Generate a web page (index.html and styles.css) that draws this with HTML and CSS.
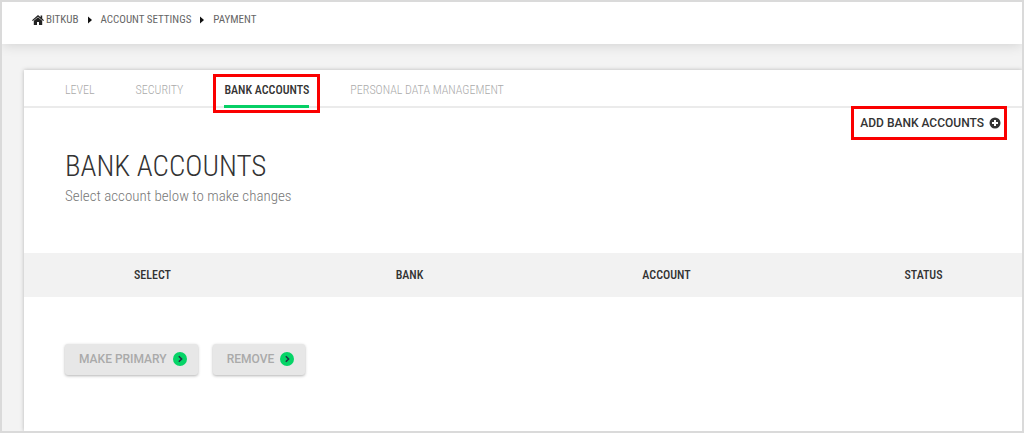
FILE: index.html
```html
<!DOCTYPE html>
<html lang="en">
<head>
<meta charset="utf-8">
<meta name="viewport" content="width=device-width, initial-scale=1">
<title>Bank accounts</title>
<link rel="stylesheet" href="styles.css">
</head>
<body>
<div class="page">
  <header class="topbar">
    <nav class="crumbs" aria-label="Breadcrumb">
      <a class="home" href="#"><svg class="home-icon" viewBox="0 0 12 10" aria-hidden="true"><path d="M6 0 0 5.2 .8 6.1 6 1.7 11.2 6.1 12 5.2 10.2 3.6V.5H8.6V2.2Z"/><path d="M6 2.2 1.8 5.7V9.9H5V7H7V9.9H10.2V5.7Z"/></svg>BITKUB</a>
      <svg class="arrow" viewBox="0 0 4 8" aria-hidden="true"><path d="M0 .5 4 4 0 7.5Z"/></svg>
      <a href="#">ACCOUNT SETTINGS</a>
      <svg class="arrow" viewBox="0 0 4 8" aria-hidden="true"><path d="M0 .5 4 4 0 7.5Z"/></svg>
      <a href="#">PAYMENT</a>
    </nav>
  </header>
  <main class="card">
    <nav class="tabs" aria-label="Settings">
      <a class="tab" href="#">LEVEL</a>
      <a class="tab" href="#">SECURITY</a>
      <a class="tab active marked" href="#" aria-current="page">BANK ACCOUNTS</a>
      <a class="tab" href="#">PERSONAL DATA MANAGEMENT</a>
    </nav>
    <div class="intro">
      <div class="heading">
        <h1>BANK ACCOUNTS</h1>
        <p>Select account below to make changes</p>
      </div>
      <button class="add marked" type="button">ADD BANK ACCOUNTS
        <svg class="plus" viewBox="0 0 12 12" aria-hidden="true"><circle cx="6" cy="6" r="5.5"/><path d="M6 3V9M3 6H9"/></svg>
      </button>
    </div>
    <table class="accounts">
      <thead><tr><th scope="col">SELECT</th><th scope="col">BANK</th><th scope="col">ACCOUNT</th><th scope="col">STATUS</th></tr></thead>
    </table>
    <div class="actions">
      <button class="action" type="button">MAKE PRIMARY
        <svg class="go" viewBox="0 0 14 14" aria-hidden="true"><circle cx="7" cy="7" r="7"/><path d="M5.8 4.2 8.6 7 5.8 9.8"/></svg>
      </button>
      <button class="action" type="button">REMOVE
        <svg class="go" viewBox="0 0 14 14" aria-hidden="true"><circle cx="7" cy="7" r="7"/><path d="M5.8 4.2 8.6 7 5.8 9.8"/></svg>
      </button>
    </div>
  </main>
</div>
</body>
</html>
```
FILE: styles.css
```css
* { box-sizing: border-box; }
body {
  margin: 0;
  font-family: "Roboto Condensed", "Liberation Sans Narrow", Roboto, sans-serif;
  font-size: 12px;
  line-height: 16px;
  color: #333;
}
a { color: inherit; text-decoration: none; }
.page {
  display: flex;
  flex-direction: column;
  min-height: 100vh;
  border: 2px solid #dadada;
  background: #f3f3f3;
  overflow: hidden;
}
.topbar {
  padding: 10px 30px 16px;
  background: #fff;
  box-shadow: 0 1px 12px rgba(0, 0, 0, .14);
}
.crumbs { display: flex; align-items: center; gap: 9px; font-size: 11px; color: #666; }
.home { display: flex; align-items: center; gap: 2px; }
.home-icon { width: 12px; height: 10px; fill: #222; }
.arrow { width: 4px; height: 8px; fill: #111; }
.card {
  flex: 1;
  margin: 26px 0 0 22px;
  background: #fff;
  box-shadow: 0 0 4px rgba(0, 0, 0, .25);
}
.tabs {
  display: flex;
  gap: 41px;
  padding: 0 41px;
  border-bottom: 2px solid #ebebeb;
}
.tab {
  margin-bottom: -2px;
  padding: 12px 0 7px;
  border-bottom: 3px solid transparent;
  font-weight: 300;
  color: #aaa;
}
.active { border-color: #06cf65; color: #333; font-weight: 500; }
.marked { position: relative; }
.marked::after {
  content: "";
  position: absolute;
  inset: 4px -11px -8px;
  border: 3px solid #fa0000;
  pointer-events: none;
}
.intro {
  display: flex;
  justify-content: space-between;
  align-items: flex-start;
  padding: 0 15px 0 41px;
}
.heading { padding: 40px 0 45px; }
h1 { margin: 0; font-size: 29px; line-height: 36px; font-weight: 300; color: #333; }
p { margin: 0; font-size: 15px; line-height: 24px; font-weight: 300; color: #777; }
button { border: 0; font: 500 12px/16px Roboto, sans-serif; cursor: pointer; }
.add {
  display: flex;
  align-items: center;
  gap: 5px;
  padding: 7px 6px 9px 9px;
  background: none;
  color: #333;
}
.add::after { inset: -2px 0 0; }
.plus { width: 12px; height: 12px; fill: #333; }
.plus path { stroke: #fff; stroke-width: 2; }
.accounts {
  width: calc(100% + 30px);
  table-layout: fixed;
  border-collapse: collapse;
  background: #f2f2f2;
}
th { padding: 14px 0; font-weight: 500; text-align: center; color: #333; }
.actions { display: flex; gap: 15px; padding: 47px 41px 52px; }
.action {
  display: flex;
  align-items: center;
  gap: 6px;
  padding: 7px 11px 8px 14px;
  border-radius: 3px;
  background: #e7e7e7;
  color: #aaa;
  box-shadow: 0 1px 3px rgba(0, 0, 0, .3);
}
.go { width: 14px; height: 14px; fill: #06d467; }
.go path { fill: none; stroke: #234; stroke-width: 1.6; }
```
